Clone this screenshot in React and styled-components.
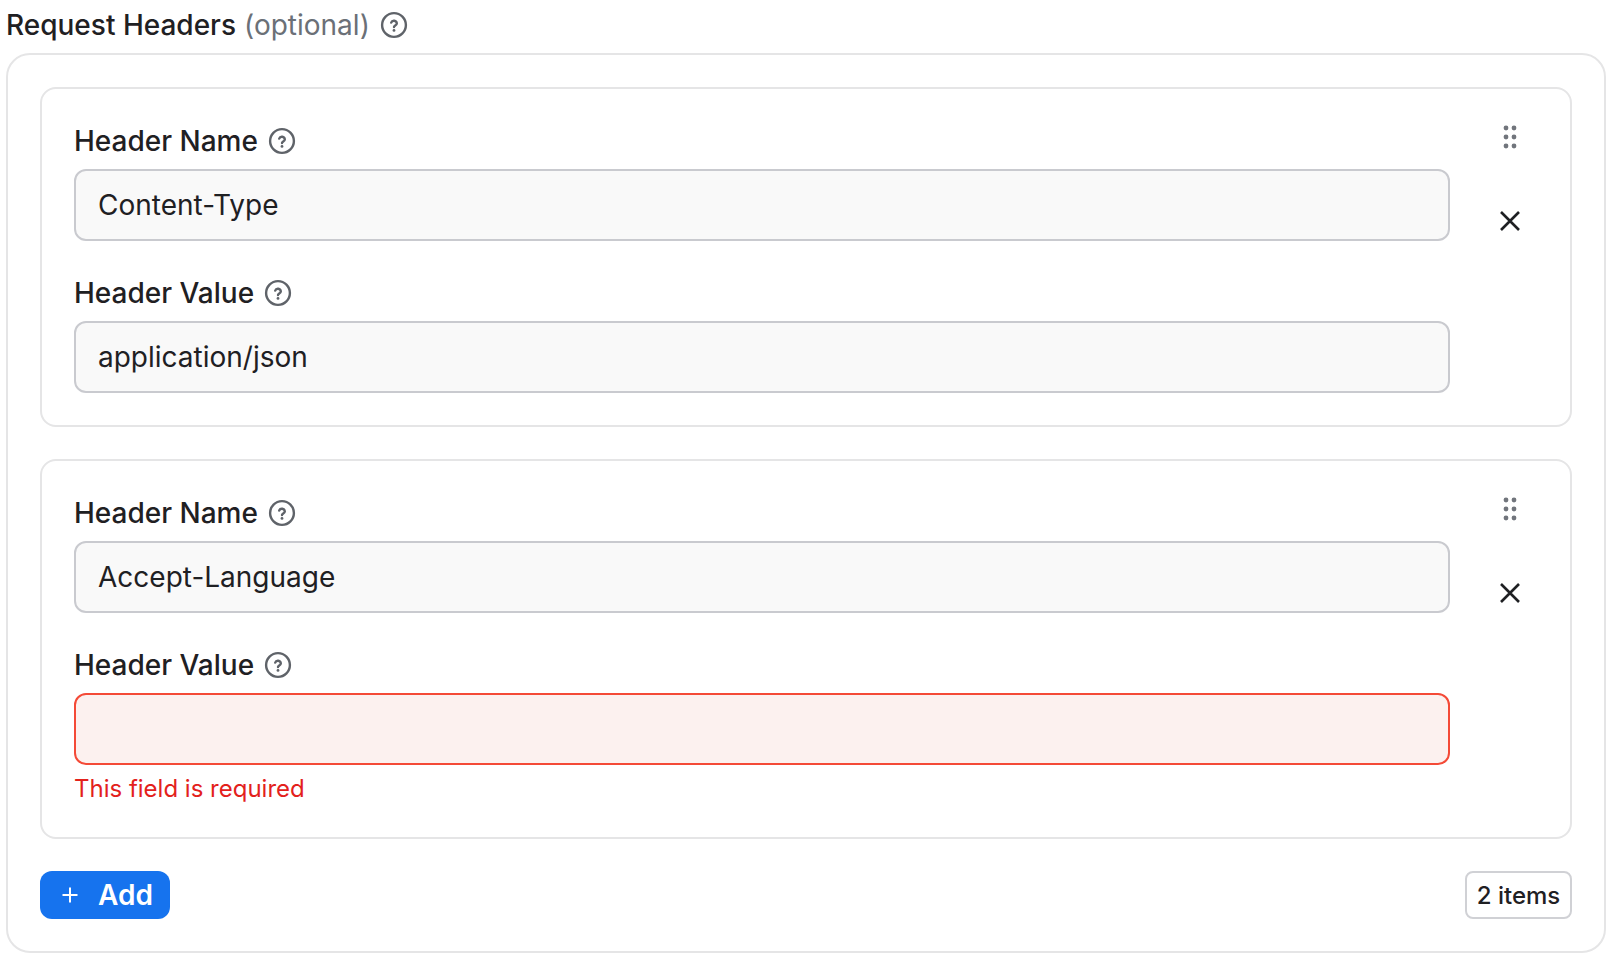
import React from 'react';
import styled, {createGlobalStyle} from 'styled-components';

const GlobalStyle = createGlobalStyle`
  html, body {
    margin: 0;
    padding: 0;
    background: #ffffff;
  }
  body {
    font-family: "Inter", "Liberation Sans", sans-serif;
    color: #1f2023;
  }
`;

const Page = styled.div`
  width: 1614px;
  height: 980px;
  box-sizing: border-box;
  padding: 5px 8px 0 6px;
`;

const Title = styled.div`
  display: flex;
  align-items: center;
  height: 40px;
  margin-bottom: 8px;
  font-size: 28px;
  font-weight: 500;
  line-height: 40px;
`;

const Optional = styled.span`
  margin-left: 8px;
  color: #6b7077;
  font-weight: 400;
`;

const HelpWrap = styled.span`
  display: inline-flex;
  margin-left: 10px;
  color: #5f6369;
`;

const Outer = styled.div`
  box-sizing: border-box;
  display: flex;
  flex-direction: column;
  gap: 32px;
  width: 1600px;
  padding: 32px;
  border: 2px solid #e5e5e6;
  border-radius: 24px;
`;

const Card = styled.div`
  display: flex;
  border: 2px solid #e5e5e6;
  border-radius: 16px;
  padding: 32px 0 32px 32px;
`;

const Fields = styled.div`
  display: flex;
  flex-direction: column;
  gap: 32px;
  width: 1376px;
`;

const Field = styled.div`
  display: flex;
  flex-direction: column;
`;

const Label = styled.div`
  display: flex;
  align-items: center;
  height: 40px;
  margin-bottom: 8px;
  font-size: 28px;
  font-weight: 500;
`;

const Input = styled.div`
  box-sizing: border-box;
  height: 72px;
  padding: 0 22px;
  display: flex;
  align-items: center;
  font-size: 28px;
  font-weight: 400;
  background: ${props => props.error ? "#fcf1ef" : "#f9f9f9"};
  border: 2px solid ${props => props.error ? "#f44a37" : "#c9cacf"};
  border-radius: 12px;
`;

const ErrorText = styled.div`
  margin-top: 8px;
  font-size: 24px;
  line-height: 32px;
  color: #e3211c;
`;

const Actions = styled.div`
  display: flex;
  flex-direction: column;
  align-items: center;
  width: 120px;
`;

const GripWrap = styled.span`
  display: flex;
  height: 32px;
  margin-top: 3px;
  margin-bottom: 53px;
  color: #71757c;
`;

const CloseWrap = styled.span`
  display: flex;
  color: #1f2023;
`;

const Footer = styled.div`
  display: flex;
  justify-content: space-between;
  align-items: center;
`;

const AddButton = styled.button`
  display: flex;
  align-items: center;
  gap: 19px;
  height: 48px;
  width: 130px;
  padding: 0 0 0 21px;
  box-sizing: border-box;
  border: none;
  border-radius: 12px;
  background: #1673ee;
  color: #ffffff;
  font-family: inherit;
  font-size: 28px;
  font-weight: 600;
`;

const Count = styled.div`
  box-sizing: border-box;
  display: flex;
  align-items: center;
  justify-content: center;
  width: 107px;
  height: 48px;
  border: 2px solid #d0d1d5;
  border-radius: 8px;
  font-size: 24px;
  font-weight: 500;
`;

const HelpIcon = () => (
    <svg width="28" height="28" viewBox="0 0 28 28" fill="none">
        <circle cx="14" cy="14" r="11.9" stroke="currentColor" strokeWidth="2.4"/>
        <path d="M11.2 11.6a2.9 2.9 0 0 1 5.6 .8c0 1.9-2.8 2.2-2.8 3.6" stroke="currentColor" strokeWidth="2.4" strokeLinecap="round"/>
        <circle cx="14" cy="19.4" r="1.4" fill="currentColor"/>
    </svg>
);

const GripIcon = () => (
    <svg width="16" height="26" viewBox="0 0 16 26" fill="currentColor">
        <circle cx="4" cy="4" r="2.4"/>
        <circle cx="12" cy="4" r="2.4"/>
        <circle cx="4" cy="13" r="2.4"/>
        <circle cx="12" cy="13" r="2.4"/>
        <circle cx="4" cy="22" r="2.4"/>
        <circle cx="12" cy="22" r="2.4"/>
    </svg>
);

const CloseIcon = () => (
    <svg width="24" height="24" viewBox="0 0 24 24" fill="none">
        <path d="M3 3l18 18M21 3L3 21" stroke="currentColor" strokeWidth="2.6"/>
    </svg>
);

const PlusIcon = () => (
    <svg width="18" height="18" viewBox="0 0 18 18" fill="none">
        <path d="M9 1.5v15M1.5 9h15" stroke="currentColor" strokeWidth="2"/>
    </svg>
);

const headers = [
    {name: "Content-Type", value: "application/json"},
    {name: "Accept-Language", value: "", error: "This field is required"},
];

export default function App() {
    return (
        <Page>
            <GlobalStyle/>
            <Title>
                Request Headers
                <Optional>(optional)</Optional>
                <HelpWrap><HelpIcon/></HelpWrap>
            </Title>
            <Outer>
                {headers.map(header => (
                    <Card key={header.name}>
                        <Fields>
                            <Field>
                                <Label>Header Name<HelpWrap><HelpIcon/></HelpWrap></Label>
                                <Input>{header.name}</Input>
                            </Field>
                            <Field>
                                <Label>Header Value<HelpWrap><HelpIcon/></HelpWrap></Label>
                                <Input error={!!header.error}>{header.value}</Input>
                                {header.error && <ErrorText>{header.error}</ErrorText>}
                            </Field>
                        </Fields>
                        <Actions>
                            <GripWrap><GripIcon/></GripWrap>
                            <CloseWrap><CloseIcon/></CloseWrap>
                        </Actions>
                    </Card>
                ))}
                <Footer>
                    <AddButton><PlusIcon/>Add</AddButton>
                    <Count>2 items</Count>
                </Footer>
            </Outer>
        </Page>
    );
}
